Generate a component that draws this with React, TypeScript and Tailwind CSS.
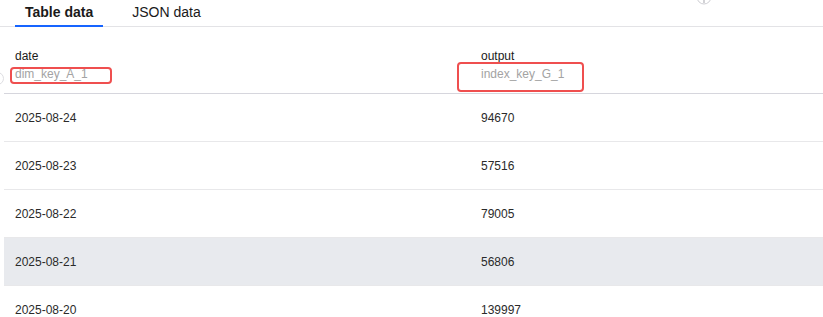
const rows = [
  { date: "2025-08-24", output: "94670" },
  { date: "2025-08-23", output: "57516" },
  { date: "2025-08-22", output: "79005" },
  { date: "2025-08-21", output: "56806", hover: true },
  { date: "2025-08-20", output: "139997" },
];

export default function App() {
  return (
    <div className="relative h-[317px] w-[823px] overflow-hidden bg-white font-['Liberation_Sans',Arial,sans-serif] text-[12px] text-[#222]">
      {/* tabs */}
      <div className="flex h-[27px] items-start gap-[19px] border-b border-[#e3e3e6] pl-[15px]">
        <div className="relative h-[26px] px-[10px] pt-[3px] text-[14px] font-bold leading-[18px] text-[#1a1a1a]">
          Table data
          <span className="absolute bottom-[-1px] left-0 h-[2px] w-full bg-[#1664ff]" />
        </div>
        <div className="h-[26px] px-[10px] pt-[3px] text-[14px] leading-[18px] text-[#1a1a1a]">JSON data</div>
      </div>

      {/* cut-off icon at top */}
      <svg className="absolute left-[696px] top-[-11px]" width="16" height="16" viewBox="0 0 16 16" fill="none">
        <circle cx="8" cy="8" r="7" stroke="#cfcfd4" strokeWidth="1" />
        <path d="M8 11v3" stroke="#b5b5bb" strokeWidth="1.2" />
      </svg>
      <span className="absolute left-[-9px] top-[72px] h-[13px] w-[13px] rounded-full border border-[#dedee2]" />

      {/* table */}
      <div className="ml-[4px]">
        <div className="grid grid-cols-[466px_1fr] border-b border-[#d6d6dd] pb-[11px] pt-[21px]">
          <div className="pl-[11px]">
            <div className="leading-[16px] text-[#1a1a1a]">date</div>
            <div className="relative mt-[2px] leading-[16px] text-[#a3a3a3]">
              dim_key_A_1
              <span className="absolute left-[-5px] top-[1px] h-[17px] w-[102px] rounded-[4px] border-2 border-[#ef4f4f]" />
            </div>
          </div>
          <div className="pl-[11px]">
            <div className="leading-[16px] text-[#1a1a1a]">output</div>
            <div className="relative mt-[2px] leading-[16px] text-[#a3a3a3]">
              index_key_G_1
              <span className="absolute left-[-24px] top-[-4px] h-[30px] w-[127px] rounded-[4px] border-2 border-[#ef4f4f]" />
            </div>
          </div>
        </div>
        {rows.map(r => (
          <div key={r.date} className={`grid h-[48px] grid-cols-[466px_1fr] items-center border-b border-[#e8e8ea] ${r.hover ? "bg-[#e8eaee]" : ""}`}>
            <div className="pl-[11px] leading-[16px] text-[#2a2a2a]">{r.date}</div>
            <div className="pl-[11px] leading-[16px] text-[#2a2a2a]">{r.output}</div>
          </div>
        ))}
      </div>
    </div>
  );
}
